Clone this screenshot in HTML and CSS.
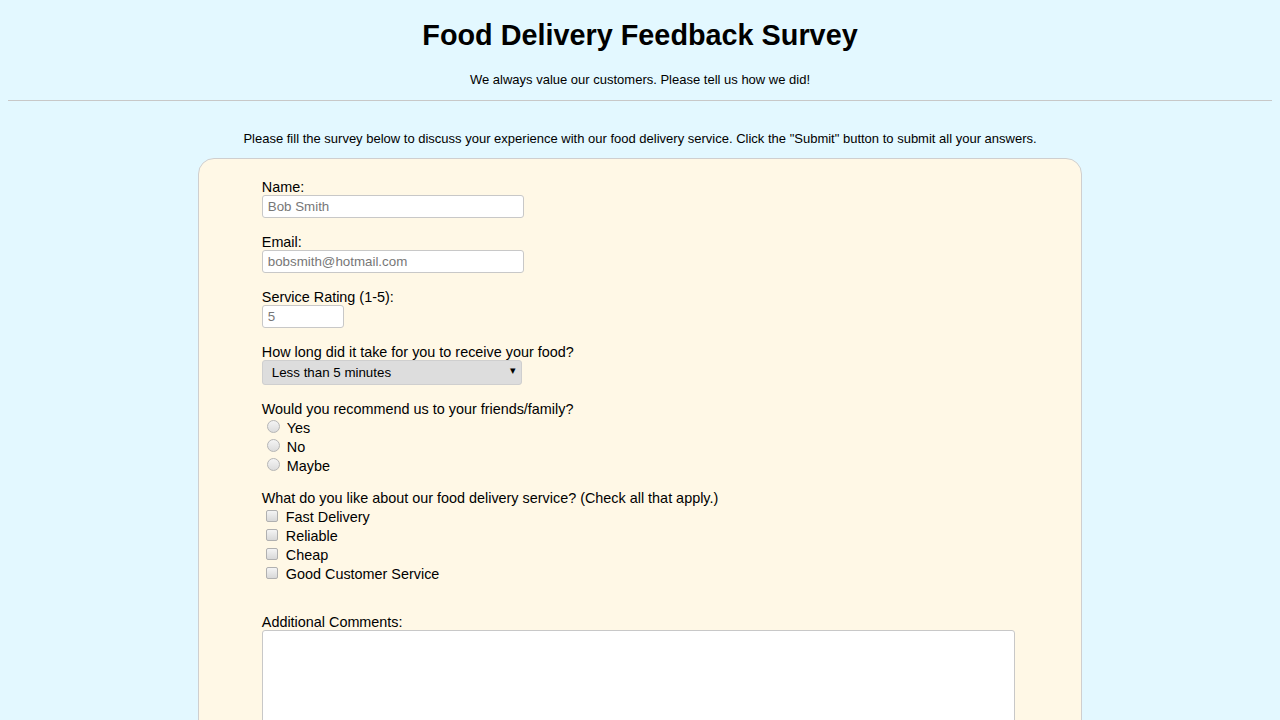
FILE: index.html
```html
<!DOCTYPE html>
<html>
<head>
<meta charset="utf-8">
<link rel="stylesheet" href="styles.css">
</head>
<body>
<header class="header">
  <h1 class="title">Food Delivery Feedback Survey</h1>
  <p class="subtitle">We always value our customers. Please tell us how we did!</p>
</header>
<hr class="rule">
<p class="intro">Please fill the survey below to discuss your experience with our food delivery service. Click the "Submit" button to submit all your answers.</p>
<form class="card">
  <div class="group">
    <label class="label" for="name">Name:</label>
    <input class="field" id="name" type="text" placeholder="Bob Smith">
  </div>
  <div class="group">
    <label class="label" for="email">Email:</label>
    <input class="field" id="email" type="email" placeholder="bobsmith@hotmail.com">
  </div>
  <div class="group">
    <label class="label" for="rating">Service Rating (1-5):</label>
    <input class="field small" id="rating" type="number" placeholder="5">
  </div>
  <div class="group">
    <label class="label" for="time">How long did it take for you to receive your food?</label>
    <div class="select">
      <span>Less than 5 minutes</span>
      <span class="arrow">▾</span>
    </div>
  </div>
  <div class="group radios">
    <div class="label">Would you recommend us to your friends/family?</div>
    <div class="options">
      <label class="opt"><span class="radio"></span>Yes</label>
      <label class="opt"><span class="radio"></span>No</label>
      <label class="opt"><span class="radio"></span>Maybe</label>
    </div>
  </div>
  <div class="group checks">
    <div class="label">What do you like about our food delivery service? (Check all that apply.)</div>
    <div class="options">
      <label class="opt"><span class="check"></span>Fast Delivery</label>
      <label class="opt"><span class="check"></span>Reliable</label>
      <label class="opt"><span class="check"></span>Cheap</label>
      <label class="opt"><span class="check"></span>Good Customer Service</label>
    </div>
  </div>
  <div class="group">
    <label class="label" for="comments">Additional Comments:</label>
    <textarea class="comments" id="comments"></textarea>
  </div>
</form>
</body>
</html>
```
FILE: styles.css
```css
body {
  margin: 8px;
  background: #e3f8ff;
  font-family: "Liberation Sans", Arial, sans-serif;
  color: #000;
}
.header {
  text-align: center;
}
.title {
  font-size: 28.8px;
  font-weight: bold;
  margin: 10px 0 0;
  line-height: 34px;
}
.subtitle {
  font-size: 13px;
  margin: 20px 0 0;
  line-height: 16px;
}
.rule {
  border: 0;
  border-top: 1px solid #c8c8c8;
  margin: 12px 0 0;
  height: 0;
}
.intro {
  text-align: center;
  font-size: 13px;
  line-height: 16px;
  margin: 30px 0 0;
}
.card {
  width: 70%;
  box-sizing: border-box;
  margin: 11px auto 0;
  background: #fff8e6;
  border: 1px solid #cfcfcf;
  border-radius: 16px;
  padding: 20px 5% 40px;
  display: flex;
  flex-direction: column;
  gap: 16px;
}
.group {
  display: flex;
  flex-direction: column;
  align-items: flex-start;
}
.radios {
  margin-bottom: -2px;
}
.checks {
  margin-bottom: 14px;
}
.options {
  display: flex;
  flex-direction: column;
  padding-top: 2px;
}
.label {
  font-size: 14.4px;
  line-height: 16px;
}
.field {
  width: 262px;
  height: 23px;
  box-sizing: border-box;
  margin: 0;
  border: 1px solid #c8c8c8;
  border-radius: 3px;
  background: #fff;
  padding: 0 5px;
  font-family: "Liberation Sans", Arial, sans-serif;
  font-size: 13.33px;
}
.field::placeholder {
  color: #777;
}
.field.small {
  width: 82px;
}
.select {
  width: 260px;
  height: 25px;
  box-sizing: border-box;
  background: #dddddd;
  border: 1px solid #cfcfcf;
  border-radius: 3px;
  display: flex;
  align-items: center;
  justify-content: space-between;
  padding: 0 5px 0 9px;
  font-size: 13.33px;
}
.arrow {
  font-size: 11px;
  margin-top: -5px;
}
.opt {
  display: flex;
  align-items: center;
  font-size: 14.4px;
  line-height: 19px;
  height: 19px;
}
.radio {
  width: 11px;
  height: 11px;
  border-radius: 50%;
  border: 1px solid #b5b5b5;
  background: linear-gradient(#f4f4f4, #dcdcdc);
  margin: -4px 7px 0 5px;
  box-sizing: content-box;
}
.check {
  width: 10px;
  height: 10px;
  border-radius: 2px;
  border: 1px solid #b0b0b0;
  background: linear-gradient(#f4f4f4, #d8d8d8);
  margin: -4px 8px 0 4px;
}
.comments {
  width: 753px;
  height: 120px;
  box-sizing: border-box;
  margin: 0;
  border: 1px solid #c8c8c8;
  border-radius: 3px;
  background: #fff;
  resize: none;
}
```
